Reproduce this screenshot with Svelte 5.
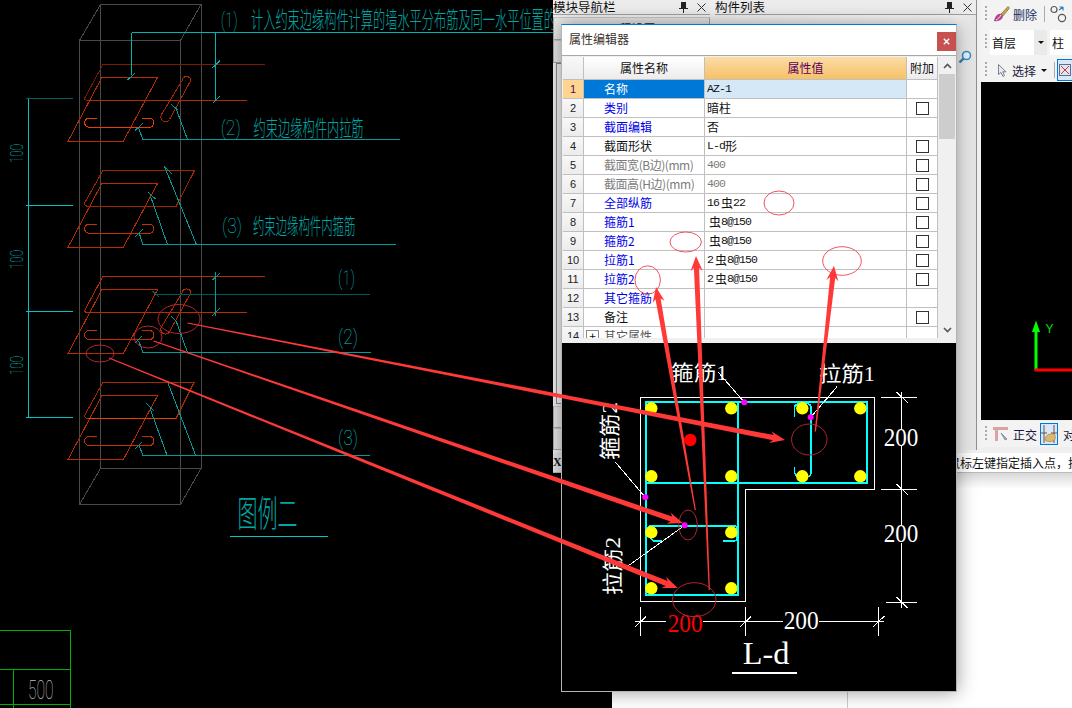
<script>
	const rows = [
		{ name: '名称', value: 'AZ-1', tone: 'sel' },
		{ name: '类别', value: '暗柱', tone: 'blue', check: true },
		{ name: '截面编辑', value: '否', tone: 'blue' },
		{ name: '截面形状', value: 'L-d形', check: true },
		{ name: '截面宽(B边)(mm)', value: '400', tone: 'gray', check: true },
		{ name: '截面高(H边)(mm)', value: '400', tone: 'gray', check: true },
		{ name: '全部纵筋', value: '16 虫22', tone: 'blue', check: true },
		{ name: '箍筋1', value: ' 虫8@150', tone: 'blue', check: true },
		{ name: '箍筋2', value: ' 虫8@150', tone: 'blue', check: true },
		{ name: '拉筋1', value: '2 虫8@150', tone: 'blue', check: true },
		{ name: '拉筋2', value: '2 虫8@150', tone: 'blue', check: true },
		{ name: '其它箍筋', value: '', tone: 'blue' },
		{ name: '备注', value: '', check: true },
		{ name: '其它属性', value: '', tone: 'dim', plus: true }
	]

	// splits a value so latin runs get the narrow mono and cjk runs stay full width
	const parts = (v) => v.match(/[\u4e00-\u9fff]+|[^\u4e00-\u9fff]+/g) || []
	const isCjk = (s) => /[\u4e00-\u9fff]/.test(s)

	// red markup arrows, thin at the tail and fat near the head
	const arrow = (x1, y1, x2, y2, neck = 2.6, hw = 6, hl = 15) => {
		const len = Math.hypot(x2 - x1, y2 - y1)
		const ux = (x2 - x1) / len
		const uy = (y2 - y1) / len
		const nx = -uy
		const ny = ux
		const bx = x2 - ux * hl
		const by = y2 - uy * hl
		const cx = x2 - ux * (hl - 3)
		const cy = y2 - uy * (hl - 3)
		const pts = [
			[x1 + nx * 0.6, y1 + ny * 0.6],
			[cx + nx * neck, cy + ny * neck],
			[bx + nx * hw, by + ny * hw],
			[x2, y2],
			[bx - nx * hw, by - ny * hw],
			[cx - nx * neck, cy - ny * neck],
			[x1 - nx * 0.6, y1 - ny * 0.6]
		]
		return pts.map((p) => p.map((n) => n.toFixed(1)).join(',')).join(' ')
	}

	const arrows = [
		[187.5, 323, 785, 440],
		[153.6, 341, 682.7, 523],
		[109, 358, 677.7, 588],
		[709.3, 590, 696, 256],
		[695.3, 510, 656, 287],
		[815.3, 431.7, 834, 265.7]
	]
	const darkMarks = [
		[179, 319, 21, 14.5],
		[148, 337, 14, 11],
		[100, 353.5, 14, 8.5],
		[809.3, 439.5, 17.7, 15.5],
		[688, 525, 9.3, 15],
		[694.3, 599.7, 21.7, 17]
	]
	const lightMarks = [
		[779, 203, 15, 12],
		[685.7, 242, 15.7, 10],
		[842, 261, 19.3, 14.3],
		[647.7, 280, 12.7, 14.2]
	]
	const bars = [
		[651.3, 408.3], [731.3, 408.3], [802.3, 408.3], [860.3, 408.3],
		[651.3, 476.3], [731.3, 476.3], [802.3, 476.3], [860.3, 476.3],
		[651.3, 532.3], [731.3, 532.3], [651.3, 588.3], [731.3, 588.3]
	]
	const anchors = [[744.3, 402.3], [810.7, 417.3], [645.3, 497.3], [684.7, 525.3]]
	const rebarRows = [0, 106, 212.3, 318.3]
</script>

<main class="desk">
	<!-- the cad sheet behind the program windows -->
	<svg class="sheet" viewBox="0 0 1072 708" width="1072" height="708">
		<g class="crisp" fill="none">
			<path stroke="#4a4a4a" d="M79.5 40.5H180.5V504.5H79.5ZM100.5 4.5H201V468.5H100.5ZM79.5 40.5L100.5 4.5M180.5 40.5L201 4.5M79.5 504.5L100.5 468.5M180.5 504.5L201 468.5" />

			{#each rebarRows as dy, i}
				<g transform="translate(0 {dy})">
					<path stroke="#b82c00" d="M101.8 77.5H157.5L123.2 141.5H67.9Z" />
					<path stroke={i === 0 ? '#f03a00' : '#c03000'} d="M97 118H89.3A4.6 4.6 0 0 0 89.3 127.3H149.3A4.6 4.6 0 0 0 149.3 118H142" />
				</g>
			{/each}

			<path stroke="#7a1c00" d="M102.9 64.5H264.6M102.9 64.5L84.6 98.3Q84.6 100.5 88 100.5" />
			<path stroke="#b02a00" d="M88 100.5H246.8" />
			<path stroke="#a82800" d="M182 80.7L161.5 114.5A4.6 4.6 0 0 0 169.5 119.5L191 80A4.6 4.6 0 0 0 182 80.7Z" />

			<path stroke="#a02600" d="M102.9 170.5H194.6L176 206.5H88Q84.6 206 84.6 203L102.9 170.5" />

			<path stroke="#b82c00" d="M102.9 276.5H264.6M102.9 276.5L84.6 310.5Q84.6 312.5 88 312.5H246.8" />
			<path stroke="#b02a00" d="M182 293L161.5 326.8A4.6 4.6 0 0 0 169.5 331.8L191 292.3A4.6 4.6 0 0 0 182 293Z" />

			<path stroke="#a82800" d="M102.9 382.5H194L176 418.5" />
			<path stroke="#a82800" d="M102.9 382.5L84.6 415.5Q84.6 418.5 88 418.5" />
			<path stroke="#f03a00" d="M88 418.5H176" />

			<path stroke="#00b4b4" d="M131.5 32.5H553M131.5 32.5V75M127.5 80L135 73M215.5 32.5V100M212.5 67.7L220 60.7M212.5 103.3L220 96" />
			<path stroke="#009c9c" d="M171.4 104.3L177.5 110M176 108.3L187.5 139.5M135 130.7L142.5 123.3M138.6 128.3L142.9 139.5H400" />
			<path stroke="#009c9c" d="M164.3 166L196.4 244.5M164.3 166L172 174M147.5 191.7L155.4 199M150.7 196.7L167.5 244.5M135 237.3L142.5 229.3M139.3 233.3L142.9 244.5H395.7" />
			<path stroke="#005c5c" d="M157 294.5H369.6M151.8 290.7L159 296.7" />
			<path stroke="#009c9c" d="M215.5 272V316M212.5 280L220 273M212.5 315.6L220 308.3M171.4 316.6L177.5 322.3M176 320.6L187.5 352.5M135 343L142.5 335.6M138.6 340.6L142.9 352.5H371.4" />
			<path stroke="#009c9c" d="M167.9 382.7L195.7 455.5M146.4 403.3L154.3 411M150 408.3L167.1 455.5M135 449.3L142.5 441.7M139.3 446L142.9 455.5H369.6" />

			<path stroke="#00c4c4" d="M28.5 98V417.5M25.7 205.5H72.5M25.7 311.5H72.5M25.7 417.5H72.5" />
			<path stroke="#006464" d="M25.7 98.5H72.5" />
			<path stroke="#00c8c8" d="M230 536.5H327.5" />
			<path stroke="#00b000" d="M0 630.5H70.5V708M0 669.5H70.5M0 704.5H70.5M13.5 669.5V708" />
		</g>

		<g class="cad-cn">
			<text x="251" y="28.3" font-size="23" textLength="305" lengthAdjust="spacingAndGlyphs">计入约束边缘构件计算的墙水平分布筋及同一水平位置的</text>
			<text x="253.6" y="136.4" font-size="22" textLength="110" lengthAdjust="spacingAndGlyphs">约束边缘构件内拉筋</text>
			<text x="252.9" y="234.4" font-size="22" textLength="102.5" lengthAdjust="spacingAndGlyphs">约束边缘构件内箍筋</text>
			<text x="237.5" y="527" font-size="36" textLength="60" lengthAdjust="spacingAndGlyphs">图例二</text>
		</g>
		<g class="cad-num">
			<text x="220.7" y="27" font-size="20" textLength="17" lengthAdjust="spacingAndGlyphs">(1)</text>
			<text x="220.7" y="135" font-size="20" textLength="20" lengthAdjust="spacingAndGlyphs">(2)</text>
			<text x="222" y="233" font-size="20" textLength="20" lengthAdjust="spacingAndGlyphs">(3)</text>
			<text x="338" y="284.5" font-size="21" textLength="17" lengthAdjust="spacingAndGlyphs">(1)</text>
			<text x="338" y="344" font-size="20" textLength="20" lengthAdjust="spacingAndGlyphs">(2)</text>
			<text x="338" y="445" font-size="20" textLength="20" lengthAdjust="spacingAndGlyphs">(3)</text>
			{#each [163, 269, 375] as y}
				<text transform="translate(23 {y}) rotate(-90)" font-size="19" textLength="19" lengthAdjust="spacingAndGlyphs">100</text>
			{/each}
			<text class="gray" x="28" y="699" font-size="26" textLength="25.6" lengthAdjust="spacingAndGlyphs">500</text>
		</g>
	</svg>

	<div class="paper"><div class="seam"></div></div>

	<!-- software behind the dialog -->
	<section class="ide">
		<div class="panes">
			<div class="nav">
				<header class="dock">
					<span>模块导航栏</span>
					<span class="dock-tools">
						<svg width="9" height="11" viewBox="0 0 9 11"><path d="M2 0H7V6H9V7H5V11H4V7H0V6H2Z" fill="#222" /></svg>
						<svg width="9" height="9" viewBox="0 0 9 9"><path d="M.5.5L8.5 8.5M8.5.5L.5 8.5" stroke="#333" fill="none" /></svg>
					</span>
				</header>
				<div class="nav-btn first">工程设置</div>
				<div class="nav-btn"></div>
				<div class="nav-tree"></div>
				<div class="nav-btn low"></div>
				<div class="nav-btn low"></div>
			</div>

			<div class="list">
				<header class="dock">
					<span>构件列表</span>
					<span class="dock-tools">
						<svg width="9" height="11" viewBox="0 0 9 11"><path d="M2 0H7V6H9V7H5V11H4V7H0V6H2Z" fill="#222" /></svg>
						<svg width="9" height="9" viewBox="0 0 9 9"><path d="M.5.5L8.5 8.5M8.5.5L.5 8.5" stroke="#333" fill="none" /></svg>
					</span>
				</header>
				<div class="list-search">
					<svg width="14" height="14" viewBox="0 0 14 14"><circle cx="8.5" cy="5.5" r="4" fill="#eaf4fb" stroke="#3c8fc8" stroke-width="1.6" /><path d="M5.5 8.5L1.5 12.5" stroke="#2f7fb8" stroke-width="2.4" /></svg>
				</div>
			</div>

			<div class="tools">
				<div class="bar">
					<i class="grip"></i>
					<svg class="ic" width="17" height="18" viewBox="0 0 17 18">
						<path d="M8 9L15 1.5L16.5 3L10 11Z" fill="#c9a24a" stroke="#6d5a2a" stroke-width=".6" />
						<path d="M1 16C2 11 5 8 8 9L10 11C10 14 6 17 1 16Z" fill="#b8458c" />
						<path d="M3 15C5 14 7 12 8 10" stroke="#eee" fill="none" />
					</svg>
					<span class="lbl blueish">删除</span>
					<i class="sep"></i>
					<svg class="ic scissors" width="18" height="18" viewBox="0 0 18 18" fill="none" stroke="#555" stroke-width="1.2">
						<circle cx="4" cy="4.5" r="3" /><circle cx="12" cy="13" r="3.6" /><path d="M9 5L13 2M13 2V5.5M13 2H9.5" stroke="#2f7fb8" />
					</svg>
				</div>
				<div class="bar">
					<i class="grip"></i>
					<span class="combo floor">首层</span>
					<span class="drop"><i class="caret"></i></span>
					<span class="combo kind">柱</span>
				</div>
				<div class="bar">
					<i class="grip"></i>
					<svg class="ic pick" width="9" height="13" viewBox="0 0 9 13"><path d="M.5.5V10.5L3 8.5L5 12.5L6.5 11.5L4.8 7.8H8Z" fill="#e4ecf2" stroke="#667" stroke-width=".8" /></svg>
					<span class="lbl">选择</span>
					<i class="caret solo"></i>
					<i class="sep"></i>
					<span class="on-btn">
						<svg width="12" height="12" viewBox="0 0 12 12"><rect x=".5" y=".5" width="11" height="11" fill="#dfe6ee" stroke="#5a6f9a" /><path d="M2 2L10 10M10 2L2 10" stroke="#d8343c" /></svg>
					</span>
				</div>
				<div class="view">
					<svg viewBox="981 82 91 338" width="91" height="338">
						<path d="M1036 320.5L1040 332H1037.5V370H1034.5V332H1032Z" fill="#00ff00" />
						<path d="M1034.5 368.5H1072V371.5H1034.5Z" fill="#ff0000" />
						<text class="axis" x="1045.5" y="333" font-size="12">Y</text>
					</svg>
				</div>
				<div class="bar foot">
					<i class="grip"></i>
					<svg class="ic" width="17" height="16" viewBox="0 0 17 16">
						<path d="M0 1H15V4H5V15H2V4H0Z" fill="#d9a3a3" />
						<path d="M8 7L14 13L12 14Z" fill="#9fb2c8" stroke="#556" stroke-width=".5" />
					</svg>
					<span class="lbl">正交</span>
					<span class="on-btn wide">
						<svg width="16" height="18" viewBox="0 0 16 18">
							<path d="M3 0V18M13 0V18M0 8H6M10 8H16" stroke="#7a4a4a" />
							<path d="M4 15C4 10 9 8 13 9C15 10 15 15 12 16C9 17 6 17 4 15Z" fill="#dcb96a" stroke="#8a6a2a" stroke-width=".5" />
						</svg>
					</span>
					<span class="lbl tight">对</span>
				</div>
			</div>
		</div>
		<footer class="status">
			<b>X</b>
			<span>鼠标左键指定插入点，拉</span>
		</footer>
	</section>

	<!-- attribute editor dialog -->
	<section class="dialog">
		<div class="titlebar">
			<span>属性编辑器</span>
			<button class="close" aria-label="close">
				<svg width="7" height="7" viewBox="0 0 7 7"><path d="M.8.8L6.2 6.2M6.2.8L.8 6.2" stroke="#fff" stroke-width="1.4" fill="none" /></svg>
			</button>
		</div>

		<div class="props">
			<div class="grid">
				<div class="row head">
					<div class="c num"></div>
					<div class="c title">属性名称</div>
					<div class="c title hot">属性值</div>
					<div class="c title add">附加</div>
				</div>
				{#each rows as r, i}
					<div class="row">
						<div class="c num" class:hot-num={i === 0}>{i + 1}</div>
						<div class="c name {r.tone || ''}">
							{#if r.plus}<span class="plus">+</span>{/if}{r.name}
						</div>
						<div class="c val" class:gray={r.tone === 'gray'} class:picked={i === 0}>
							{#each parts(r.value) as p}
								<span class={isCjk(p) ? 'cn' : 'latin'}>{p}</span>
							{/each}
						</div>
						<div class="c add">
							{#if r.check}<span class="box"></span>{/if}
						</div>
					</div>
				{/each}
			</div>
			<div class="scroll">
				<div class="arrow">
					<svg width="9" height="6" viewBox="0 0 9 6"><path d="M1 5L4.5 1.5L8 5" stroke="#555" stroke-width="1.6" fill="none" /></svg>
				</div>
				<div class="thumb"></div>
				<div class="track"></div>
				<div class="arrow">
					<svg width="9" height="6" viewBox="0 0 9 6"><path d="M1 1L4.5 4.5L8 1" stroke="#555" stroke-width="1.6" fill="none" /></svg>
				</div>
			</div>
		</div>

		<div class="preview">
			<svg viewBox="562 343 394 348" width="394" height="348">
				<g class="crisp" fill="none">
					<path stroke="#fff" d="M640.5 397.5H874.5V489.5H745.5V601.5H640.5Z" />
					<path stroke="#00ffff" stroke-width="2" d="M645.7 402.3H867.3V483H645.7ZM645.7 483V595H738.3V402.3" />
					<path stroke="#00ffff" stroke-width="1.6" d="M661.7 541H654Q646.5 536 646.5 530Q648 526 651 526H734Q737 526 737 529V538Q737 541 733 541H723.3" />
					<path stroke="#00ffff" stroke-width="1.6" d="M794.3 417.3V408Q795 403.5 801 403.5H807Q811 404 811 408V472Q811 476.7 807 477H800Q794.3 476 794.3 470V466.7" />

					<path stroke="#fff" d="M718.3 372.3L744.3 402.3M837 386.7L810.7 417.3M615 461.7L645.3 497.3M627 566.7L684.7 525.3" />

					<path stroke="#fff" d="M901.5 392.3V429M901.5 446V526M901.5 543V608.3" />
					<path stroke="#fff" d="M881 397.5H917M881 489.5H917M886 602.5H917M896.7 392.3L907.7 402.7M896.7 484.3L907.7 494.7M896.7 597.3L907.7 608.3" />
					<path stroke="#fff" d="M635.3 621.5H666M702.7 621.5H782.7M819.3 621.5H883.7" />
					<path stroke="#fff" d="M640.5 606.7V635.7M745.5 606.7V635.7M878.5 606.7V635.7M635.3 626.7L646 616.7M740 626.7L751 616.7M873 626.7L884.5 616" />
					<path stroke="#fff" stroke-width="2" d="M732 672.8H796.7" />
				</g>

				{#each bars as [x, y]}
					<circle cx={x} cy={y} r="6.2" fill="#ffff00" />
				{/each}
				<circle cx="690.3" cy="440" r="6.2" fill="#ff0000" />
				{#each anchors as [x, y]}
					<circle cx={x} cy={y} r="3" fill="#ff00ff" />
				{/each}

				<g class="sec-txt">
					<text x="671" y="380" font-size="21" textLength="56.7" lengthAdjust="spacingAndGlyphs">箍筋1</text>
					<text x="819" y="381" font-size="21" textLength="56" lengthAdjust="spacingAndGlyphs">拉筋1</text>
					<text transform="translate(617 460) rotate(-90)" font-size="21" textLength="58" lengthAdjust="spacingAndGlyphs">箍筋2</text>
					<text transform="translate(620 595) rotate(-90)" font-size="21" textLength="58" lengthAdjust="spacingAndGlyphs">拉筋2</text>
					<text x="883.7" y="446" font-size="25" textLength="34.6" lengthAdjust="spacingAndGlyphs">200</text>
					<text x="883.7" y="542.3" font-size="25" textLength="34.6" lengthAdjust="spacingAndGlyphs">200</text>
					<text x="783.7" y="629.3" font-size="25" textLength="35" lengthAdjust="spacingAndGlyphs">200</text>
					<text class="red" x="667.7" y="631.7" font-size="25" textLength="35" lengthAdjust="spacingAndGlyphs">200</text>
					<text x="742.7" y="664" font-size="32" textLength="46.6" lengthAdjust="spacingAndGlyphs">L-d</text>
				</g>
			</svg>
		</div>
	</section>

	<!-- hand drawn review marks over everything -->
	<svg class="marks" viewBox="0 0 1072 708" width="1072" height="708">
		{#each darkMarks as [cx, cy, rx, ry]}
			<ellipse {cx} {cy} {rx} {ry} fill="none" stroke="#b32430" stroke-width="1" />
		{/each}
		{#each lightMarks as [cx, cy, rx, ry]}
			<ellipse {cx} {cy} {rx} {ry} fill="none" stroke="#ee5560" stroke-width="1" />
		{/each}
		{#each arrows as a}
			<polygon points={arrow(...a)} fill="#ff3838" />
		{/each}
	</svg>
</main>

<style>
	:global(body) {
		background: #000;
	}
	.desk {
		position: relative;
		width: 1072px;
		height: 708px;
		background: #000;
		overflow: hidden;
		font-family: "Noto Sans CJK SC", "Liberation Sans", sans-serif;
		font-size: 12px;
		color: #111;
	}
	svg {
		display: block;
	}
	.sheet,
	.marks {
		position: absolute;
		left: 0;
		top: 0;
	}
	.marks {
		pointer-events: none;
	}
	.crisp {
		shape-rendering: crispEdges;
	}
	.cad-cn text {
		fill: #00c4c4;
		font-family: "Noto Sans CJK SC", sans-serif;
		font-weight: 300;
		opacity: 0.85;
	}
	.cad-num text {
		fill: #00c0c0;
		font-family: Roboto, "Liberation Sans", sans-serif;
		font-weight: 100;
	}
	.cad-num text.gray {
		fill: #c0c0c0;
	}
	.sec-txt text {
		fill: #fff;
		font-family: "Liberation Serif", "Noto Sans CJK SC", serif;
	}
	.sec-txt text.red {
		fill: #ff0000;
	}

	/* white page area under the program */
	.paper {
		position: absolute;
		left: 612px;
		right: 0;
		top: 473px;
		bottom: 0;
		background: linear-gradient(#d8d8d8, #fff 16px);
	}
	.seam {
		width: 235px;
		height: 100%;
		border-right: 1px solid #ccc;
	}

	.ide {
		position: absolute;
		left: 553px;
		top: 0;
		width: 519px;
		height: 473px;
		display: flex;
		flex-direction: column;
		background: #f0f0f0;
	}
	.panes {
		display: flex;
		height: 450px;
	}
	.nav {
		width: 157px;
		display: flex;
		flex-direction: column;
		margin-right: 5px;
	}
	.dock {
		height: 14px;
		line-height: 14px;
		font-size: 12.5px;
		display: flex;
		justify-content: space-between;
		align-items: center;
		background: #ececec;
		border-bottom: 1px solid #a0a0a0;
		flex: none;
		color: #111;
	}
	.dock-tools {
		display: flex;
		align-items: center;
		gap: 9px;
		padding-right: 4px;
	}
	.nav-btn {
		height: 21px;
		flex: none;
		border: 1px solid #a8a8a8;
		border-top-color: #c8c8c8;
		background: #e8e8e8;
		box-sizing: content-box;
		text-align: center;
		line-height: 22px;
		font-size: 12px;
		color: #222;
	}
	.nav-btn.first {
		margin-top: 2px;
	}
	.nav-btn.low {
		height: 20px;
	}
	.nav-tree {
		flex: 1;
		margin-left: 3px;
		border: 1px solid #8a8a8a;
		background: #f4f4f4;
		margin-bottom: 2px;
	}

	.list {
		width: 262px;
		box-sizing: border-box;
		display: flex;
		flex-direction: column;
		border-right: 1px solid #909090;
		background: linear-gradient(90deg, #f0f0f0, #fafafa 88%, #e4e4e4);
		margin-right: 4px;
	}
	.list-search {
		display: flex;
		justify-content: flex-end;
		padding: 35px 4px 0 0;
	}

	.tools {
		width: 91px;
		display: flex;
		flex-direction: column;
		background: #eeeeee;
	}
	.bar {
		height: 28px;
		flex: none;
		display: flex;
		align-items: center;
		overflow: hidden;
		background: #f3f3f3;
		white-space: nowrap;
		box-sizing: border-box;
		padding-left: 4px;
	}
	.bar.foot {
		margin-top: 1px;
		height: 26px;
	}
	.grip {
		width: 2px;
		height: 16px;
		flex: none;
		margin-right: 6px;
		background: repeating-linear-gradient(#aaa 0 2px, transparent 2px 4px);
	}
	.ic {
		flex: none;
		margin-right: 3px;
	}
	.pick {
		margin: 0 5px 0 5px;
	}
	.scissors {
		margin-left: 5px;
	}
	.lbl {
		font-size: 12px;
		color: #1a1a3a;
		flex: none;
		width: 24px;
	}
	.lbl.tight {
		margin-left: 5px;
	}
	.blueish {
		color: #203060;
	}
	.sep {
		width: 1px;
		height: 16px;
		flex: none;
		margin-left: 7px;
		background: #aaa;
	}
	.combo {
		background: #fff;
		height: 25px;
		line-height: 25px;
		font-size: 12px;
		flex: none;
	}
	.floor {
		width: 44px;
		padding-left: 2px;
		margin-left: -3px;
		box-sizing: border-box;
	}
	.kind {
		flex: 1;
		padding-left: 2px;
	}
	.drop {
		width: 13px;
		height: 25px;
		flex: none;
		background: #eaeaea;
		display: flex;
		align-items: center;
		justify-content: center;
		margin-right: 3px;
	}
	.caret {
		width: 0;
		height: 0;
		border: 3px solid transparent;
		border-top: 3.5px solid #111;
		border-bottom: 0;
		display: block;
		flex: none;
	}
	.caret.solo {
		margin-left: 5px;
		border-width: 3.5px 3.5px 0;
		border-color: #111 transparent transparent;
	}
	.on-btn {
		display: flex;
		align-items: center;
		justify-content: center;
		width: 16px;
		height: 22px;
		margin-left: 2px;
		flex: none;
		border: 1px solid #0078d7;
		background: #d8e8f6;
		box-sizing: border-box;
	}
	.on-btn.wide {
		width: 18px;
		margin-left: 3px;
	}
	.view {
		height: 338px;
		background: #000;
		flex: none;
		margin-top: -2px;
	}
	.axis {
		fill: #00e000;
		font-family: "Liberation Sans", sans-serif;
	}

	.status {
		height: 23px;
		box-sizing: border-box;
		padding-top: 3px;
		display: flex;
		align-items: center;
		background: linear-gradient(#f0f0f0 3px, #fff 3px);
		border-bottom: 1px solid #bbb;
		font-size: 12px;
		line-height: 19px;
		white-space: nowrap;
		overflow: hidden;
		color: #111;
	}
	.status b {
		width: 8px;
		font-family: "Liberation Serif", serif;
		font-size: 12px;
		margin-right: 387px;
		background: #e8e8e8;
	}

	/* dialog */
	.dialog {
		position: absolute;
		left: 561px;
		top: 24px;
		width: 396px;
		height: 668px;
		box-sizing: border-box;
		display: flex;
		flex-direction: column;
		background: #f0f0f0;
		border: 1px solid #b4b4b4;
		border-top: 1px solid #0078d7;
		box-shadow: 0 0 18px rgba(0, 0, 0, 0.4);
	}
	.titlebar {
		height: 31px;
		flex: none;
		box-sizing: border-box;
		background: #fff;
		border-bottom: 1px solid #a8a8a8;
		display: flex;
		justify-content: space-between;
		padding-left: 7px;
		line-height: 28px;
		color: #3a3028;
	}
	.close {
		width: 19px;
		height: 19px;
		margin-top: 7px;
		padding: 0;
		border: 0;
		background: #c75050;
		display: flex;
		align-items: center;
		justify-content: center;
	}
	.props {
		display: flex;
		height: 281px;
		flex: none;
		margin: 1px 0 5px 1px;
		background: #fff;
	}
	.grid {
		width: 375px;
		overflow: hidden;
		flex: none;
	}
	.row {
		display: grid;
		grid-template-columns: 21px 121px 202px 31px;
		height: 19px;
		box-sizing: border-box;
		border-bottom: 1px solid #c0c0c0;
		line-height: 18px;
	}
	.row.head {
		height: 23px;
		line-height: 22px;
	}
	.c {
		box-sizing: border-box;
		border-right: 1px solid #c0c0c0;
		white-space: pre;
		overflow: hidden;
	}
	.num {
		background: linear-gradient(#f8f8f8, #ececec);
		text-align: center;
		font-family: "Liberation Sans", sans-serif;
		font-size: 11px;
		color: #222;
	}
	.hot-num {
		background: #fdd490;
		color: #60005a;
	}
	.title {
		text-align: center;
		background: linear-gradient(#ffffff, #ececec);
		color: #111;
	}
	.title.hot {
		background: linear-gradient(#fbdca4, #f6c168);
		color: #5a0060;
	}
	.name {
		padding-left: 20px;
		position: relative;
	}
	.name.sel {
		background: #0078d7;
		color: #fff;
	}
	.name.blue {
		color: #0000e8;
	}
	.name.gray {
		color: #7c7c7c;
		letter-spacing: -0.45px;
	}
	.name.dim {
		color: #555;
	}
	.plus {
		position: absolute;
		left: 2px;
		top: 3px;
		width: 13px;
		height: 13px;
		box-sizing: border-box;
		border: 1px solid #888;
		line-height: 10px;
		text-align: center;
		color: #111;
	}
	.val {
		padding-left: 2px;
		display: flex;
		align-items: center;
	}
	.val.picked {
		background: #d5e8f8;
	}
	.val.gray {
		color: #7c7c7c;
	}
	.latin {
		font-family: "Liberation Mono", monospace;
		font-size: 11.5px;
		letter-spacing: -0.9px;
		word-spacing: -4px;
		white-space: pre;
	}
	.add {
		display: flex;
		align-items: center;
		justify-content: center;
	}
	.title.add {
		display: block;
	}
	.box {
		width: 13px;
		height: 13px;
		box-sizing: border-box;
		border: 1px solid #333;
		background: #fff;
	}
	.scroll {
		width: 18px;
		display: flex;
		flex-direction: column;
		background: #f0f0f0;
	}
	.arrow {
		height: 17px;
		flex: none;
		display: flex;
		align-items: center;
		justify-content: center;
	}
	.thumb {
		height: 65px;
		flex: none;
		margin: 0 1px;
		background: #cdcdcd;
	}
	.track {
		flex: 1;
	}
	.preview {
		flex: 1;
		background: #000;
	}
</style>
